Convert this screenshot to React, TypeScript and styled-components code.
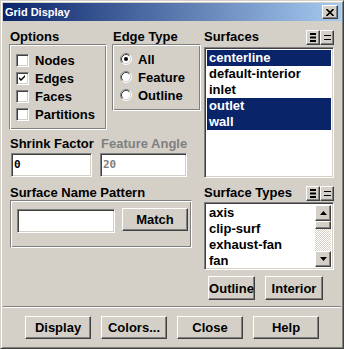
import React from 'react';
import styled, { createGlobalStyle, css } from 'styled-components';

const FACE = '#d4d0c8';
const FONT = '"Liberation Sans", Arial, sans-serif';

const GlobalStyle = createGlobalStyle`
  html, body { margin: 0; padding: 0; background: ${FACE}; }
  body { font-family: ${FONT}; }
  * { box-sizing: border-box; }
`;

const raised = css`
  background: ${FACE};
  border: 1px solid;
  border-color: #fff #404040 #404040 #fff;
  box-shadow: inset -1px -1px #808080;
`;

const sunken = css`
  border: 1px solid;
  border-color: #808080 #fff #fff #808080;
  box-shadow: inset 1px 1px #404040, inset -1px -1px ${FACE};
`;

const etched = css`
  border: 1px solid;
  border-color: #808080 #fff #fff #808080;
  box-shadow: inset 1px 1px #fff, inset -1px -1px #808080;
`;

const Window = styled.div`
  width: 344px;
  height: 349px;
  background: ${FACE};
  border: 1px solid;
  border-color: ${FACE} #404040 #404040 ${FACE};
  box-shadow: inset 1px 1px #fff, inset -1px -1px #808080;
  padding: 2px;
  display: flex;
  flex-direction: column;
  color: #000;
  font: bold 13px/15px ${FONT};
`;

const TitleBar = styled.div`
  height: 18px;
  flex: none;
  background: linear-gradient(to right, #0a246a, #a6caf0);
  display: flex;
  align-items: center;
  justify-content: space-between;
  padding-left: 2px;
  color: #fff;
  font: bold 11px/14px ${FONT};
`;

const CloseButton = styled.div`
  ${raised};
  width: 16px;
  height: 14px;
  margin-right: 3px;
  display: flex;
  align-items: center;
  justify-content: center;
`;

const Main = styled.div`
  height: 285px;
  flex: none;
  padding: 8px 0 0 6px;
  display: flex;
  gap: 3px;
`;

const LeftPanel = styled.div`
  width: 192px;
  display: flex;
  flex-direction: column;
`;

const TopRow = styled.div`
  display: flex;
  gap: 5px;
`;

const Column = styled.div<{ $w: number }>`
  width: ${(p) => p.$w}px;
  display: flex;
  flex-direction: column;
`;

const Label = styled.div<{ $disabled?: boolean; $shift?: number }>`
  height: 15px;
  line-height: 15px;
  white-space: nowrap;
  padding-left: 1px;
  margin-left: ${(p) => p.$shift ?? 0}px;
  color: ${(p) => (p.$disabled ? '#808080' : '#000')};
`;

const GroupBox = styled.div<{ $h: number; $pad: string }>`
  ${etched};
  height: ${(p) => p.$h}px;
  padding: ${(p) => p.$pad};
`;

const OptionRow = styled.div<{ $gap: number }>`
  height: 18px;
  display: flex;
  align-items: center;
  gap: ${(p) => p.$gap}px;
  white-space: nowrap;
`;

const CheckBox = styled.div`
  ${sunken};
  width: 13px;
  height: 13px;
  background: #fff;
  flex: none;
  display: flex;
  align-items: center;
  justify-content: center;
`;

const FieldsRow = styled.div`
  display: flex;
  margin-top: 6px;
`;

const TextField = styled.div<{ $w: number; $disabled?: boolean }>`
  ${sunken};
  width: ${(p) => p.$w}px;
  height: 24px;
  background: #fff;
  padding-left: 2px;
  display: flex;
  align-items: center;
  font: bold 11px/12px "DejaVu Sans Mono", "Liberation Mono", monospace;
  color: ${(p) => (p.$disabled ? '#808080' : '#000')};
`;

const FieldGap = styled.div`
  height: 2px;
`;

const PatternLabel = styled(Label)`
  margin-top: 8px;
`;

const PatternBox = styled.div`
  ${etched};
  width: 182px;
  height: 48px;
  margin-left: 1px;
  padding: 8px 0 0 6px;
  display: flex;
  align-items: flex-start;
  gap: 7px;
`;

const PushButton = styled.div<{ $w: number; $h: number; $mt?: number }>`
  ${raised};
  width: ${(p) => p.$w}px;
  height: ${(p) => p.$h}px;
  margin-top: ${(p) => p.$mt ?? 0}px;
  flex: none;
  display: flex;
  align-items: center;
  justify-content: center;
  white-space: nowrap;
  font: bold 13px/15px ${FONT};
`;

const RightPanel = styled.div`
  width: 130px;
  display: flex;
  flex-direction: column;
`;

const ListHeader = styled.div<{ $h: number; $mt?: number }>`
  height: ${(p) => p.$h}px;
  margin-top: ${(p) => p.$mt ?? 0}px;
  display: flex;
  justify-content: space-between;
  align-items: flex-start;
`;

const MiniButtons = styled.div`
  display: flex;
  margin-top: 1px;
`;

const MiniButton = styled.div`
  ${raised};
  width: 14px;
  height: 15px;
  display: flex;
  align-items: center;
  justify-content: center;
`;

const ListBox = styled.div<{ $h: number }>`
  ${sunken};
  height: ${(p) => p.$h}px;
  background: #fff;
  padding: 2px;
  display: flex;
`;

const ListItems = styled.div`
  flex: 1;
  display: flex;
  flex-direction: column;
  overflow: hidden;
`;

const ListItem = styled.div<{ $sel?: boolean }>`
  height: 16px;
  line-height: 16px;
  padding-left: 2px;
  white-space: nowrap;
  background: ${(p) => (p.$sel ? '#0a246a' : 'transparent')};
  color: ${(p) => (p.$sel ? '#fff' : '#000')};
`;

const ScrollBar = styled.div`
  width: 16px;
  flex: none;
  display: flex;
  flex-direction: column;
`;

const ScrollArrow = styled.div`
  ${raised};
  height: 16px;
  flex: none;
  display: flex;
  align-items: center;
  justify-content: center;
`;

const ScrollThumb = styled.div`
  ${raised};
  height: 8px;
  flex: none;
`;

const ScrollTrack = styled.div`
  flex: 1;
  background: repeating-conic-gradient(${FACE} 0 25%, #fff 0 50%) 0 0 / 2px 2px;
`;

const ListButtons = styled.div`
  display: flex;
  gap: 10px;
  margin-top: 6px;
  padding-left: 4px;
`;

const Separator = styled.div`
  height: 2px;
  flex: none;
  border-top: 1px solid #808080;
  border-bottom: 1px solid #fff;
`;

const Footer = styled.div`
  flex: 1;
  display: flex;
  gap: 10px;
  padding: 8px 0 0 22px;
`;

const CheckMark = () => (
  <svg width="9" height="9" viewBox="0 0 9 9">
    <path d="M1 3 L3 5 L7 1 L7 3 L3 7 L1 5 Z" fill="#000" />
  </svg>
);

const Radio = ({ on }: { on?: boolean }) => (
  <svg width="12" height="12" viewBox="0 0 12 12" style={{ flex: 'none' }}>
    <circle cx="6" cy="6" r="5" fill="#fff" />
    <path d="M2.11 9.89 A5.5 5.5 0 0 1 9.89 2.11" stroke="#808080" fill="none" />
    <path d="M9.89 2.11 A5.5 5.5 0 0 1 2.11 9.89" stroke="#fff" fill="none" />
    <path d="M2.82 9.18 A4.5 4.5 0 0 1 9.18 2.82" stroke="#404040" fill="none" />
    <path d="M9.18 2.82 A4.5 4.5 0 0 1 2.82 9.18" stroke={FACE} fill="none" />
    {on && <circle cx="6" cy="6" r="2" fill="#000" />}
  </svg>
);

const SelectAllIcon = () => (
  <svg width="6" height="9" viewBox="0 0 6 9">
    <rect x="0" y="0" width="6" height="2" fill="#000" />
    <rect x="0" y="3.5" width="6" height="2" fill="#000" />
    <rect x="0" y="7" width="6" height="2" fill="#000" />
  </svg>
);

const DeselectIcon = () => (
  <svg width="7" height="5" viewBox="0 0 7 5">
    <rect x="0" y="0" width="7" height="1" fill="#000" />
    <rect x="0" y="4" width="7" height="1" fill="#000" />
  </svg>
);

const CloseIcon = () => (
  <svg width="8" height="7" viewBox="0 0 8 7">
    <path d="M0.5 0 L7.5 7 M7.5 0 L0.5 7" stroke="#000" strokeWidth="1.6" />
  </svg>
);

const Arrow = ({ up }: { up?: boolean }) => (
  <svg width="7" height="4" viewBox="0 0 7 4">
    <path d={up ? 'M3.5 0 L7 4 L0 4 Z' : 'M0 0 L7 0 L3.5 4 Z'} fill="#000" />
  </svg>
);

const options = [
  { name: 'Nodes', on: false },
  { name: 'Edges', on: true },
  { name: 'Faces', on: false },
  { name: 'Partitions', on: false },
];

const edgeTypes = [
  { name: 'All', on: true },
  { name: 'Feature', on: false },
  { name: 'Outline', on: false },
];

const surfaces = [
  { name: 'centerline', sel: true },
  { name: 'default-interior', sel: false },
  { name: 'inlet', sel: false },
  { name: 'outlet', sel: true },
  { name: 'wall', sel: true },
];

const surfaceTypes = ['axis', 'clip-surf', 'exhaust-fan', 'fan'];

const footerButtons = ['Display', 'Colors...', 'Close', 'Help'];

export default function App() {
  return (
    <>
      <GlobalStyle />
      <Window>
        <TitleBar>
          <span>Grid Display</span>
          <CloseButton>
            <CloseIcon />
          </CloseButton>
        </TitleBar>
        <Main>
          <LeftPanel>
            <TopRow>
              <Column $w={98}>
                <Label>Options</Label>
                <GroupBox $h={86} $pad="6px 0 0 6px">
                  {options.map((o) => (
                    <OptionRow key={o.name} $gap={6}>
                      <CheckBox>{o.on && <CheckMark />}</CheckBox>
                      <span>{o.name}</span>
                    </OptionRow>
                  ))}
                </GroupBox>
              </Column>
              <Column $w={89}>
                <Label>Edge Type</Label>
                <GroupBox $h={67} $pad="5px 0 0 7px">
                  {edgeTypes.map((e) => (
                    <OptionRow key={e.name} $gap={6}>
                      <Radio on={e.on} />
                      <span>{e.name}</span>
                    </OptionRow>
                  ))}
                </GroupBox>
              </Column>
            </TopRow>
            <FieldsRow>
              <Column $w={91}>
                <Label>Shrink Factor</Label>
                <FieldGap />
                <TextField $w={81} style={{ marginLeft: 2 }}>0</TextField>
              </Column>
              <Column $w={87}>
                <Label $disabled>Feature Angle</Label>
                <FieldGap />
                <TextField $w={87} $disabled>20</TextField>
              </Column>
            </FieldsRow>
            <PatternLabel>Surface Name Pattern</PatternLabel>
            <PatternBox>
              <TextField $w={98} />
              <PushButton $w={66} $h={23} $mt={-1}>Match</PushButton>
            </PatternBox>
          </LeftPanel>
          <RightPanel>
            <ListHeader $h={18}>
              <Label $shift={-1}>Surfaces</Label>
              <MiniButtons>
                <MiniButton><SelectAllIcon /></MiniButton>
                <MiniButton><DeselectIcon /></MiniButton>
              </MiniButtons>
            </ListHeader>
            <ListBox $h={131}>
              <ListItems>
                {surfaces.map((s) => (
                  <ListItem key={s.name} $sel={s.sel}>{s.name}</ListItem>
                ))}
              </ListItems>
            </ListBox>
            <ListHeader $h={17} $mt={7}>
              <Label $shift={-1}>Surface Types</Label>
              <MiniButtons>
                <MiniButton><SelectAllIcon /></MiniButton>
                <MiniButton><DeselectIcon /></MiniButton>
              </MiniButtons>
            </ListHeader>
            <ListBox $h={68}>
              <ListItems>
                {surfaceTypes.map((s) => (
                  <ListItem key={s}>{s}</ListItem>
                ))}
              </ListItems>
              <ScrollBar>
                <ScrollArrow><Arrow up /></ScrollArrow>
                <ScrollThumb />
                <ScrollTrack />
                <ScrollArrow><Arrow /></ScrollArrow>
              </ScrollBar>
            </ListBox>
            <ListButtons>
              <PushButton $w={47} $h={24}>Outline</PushButton>
              <PushButton $w={58} $h={24}>Interior</PushButton>
            </ListButtons>
          </RightPanel>
        </Main>
        <Separator />
        <Footer>
          {footerButtons.map((b) => (
            <PushButton key={b} $w={66} $h={23}>{b}</PushButton>
          ))}
        </Footer>
      </Window>
    </>
  );
}
